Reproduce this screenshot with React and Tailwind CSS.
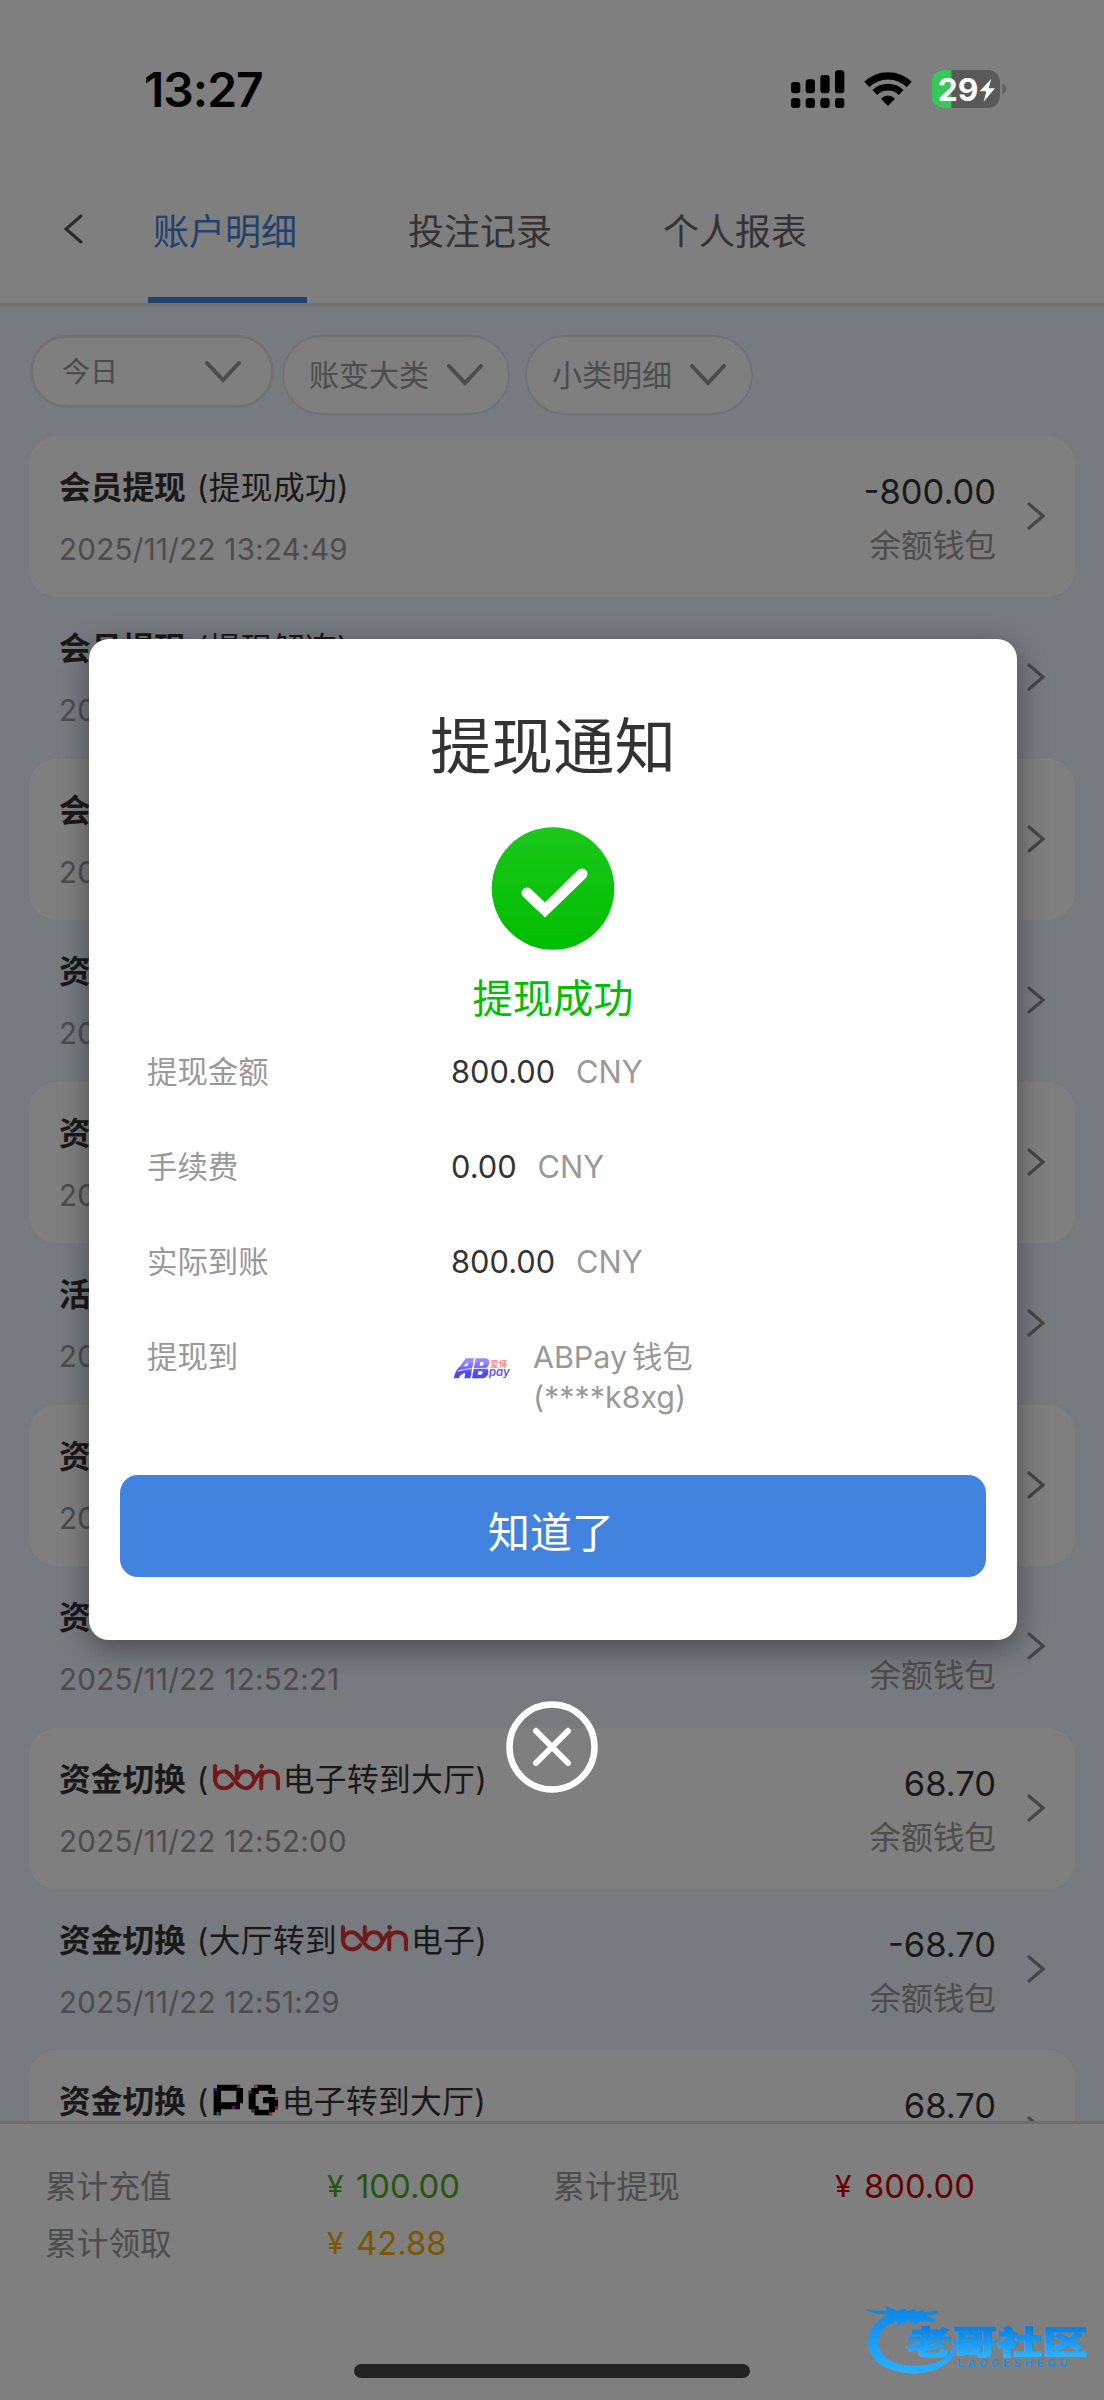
import React from "react";

const UI = "font-['Inter','Noto_Sans_CJK_SC',sans-serif]";

function Signal() {
  return (
    <svg width="54" height="38" viewBox="95 60 162 114">
      <g fill="#000">
        <rect x="95" y="96" width="28" height="34" rx="9" />
        <rect x="139" y="88" width="28" height="42" rx="9" />
        <rect x="183" y="75" width="28" height="55" rx="9" />
        <rect x="227" y="61" width="28" height="69" rx="9" />
        <rect x="95" y="144" width="28" height="30" rx="9" />
        <rect x="139" y="144" width="28" height="30" rx="9" />
        <rect x="183" y="144" width="28" height="30" rx="9" />
        <rect x="227" y="144" width="28" height="30" rx="9" />
      </g>
    </svg>
  );
}

function Wifi() {
  return (
    <svg width="48" height="36" viewBox="313 64 144 108">
      <g fill="none" stroke="#000">
        <path d="M321.5 104.5A91 91 0 0 1 448.5 104.5" strokeWidth="22" />
        <path d="M345.5 128.5A57 57 0 0 1 424.500 128.5" strokeWidth="20" />
      </g>
      <path d="M385 169L364 147Q385 128 406 147Z" fill="#000" />
    </svg>
  );
}

function Battery() {
  return (
    <svg width="76" height="38" viewBox="515 60 228 114">
      <defs>
        <clipPath id="cell"><rect x="516" y="60" width="206" height="114" rx="36" /></clipPath>
      </defs>
      <g clipPath="url(#cell)">
        <rect x="515" y="60" width="210" height="114" fill="#595959" />
        <rect x="515" y="60" width="61" height="114" fill="#34c759" />
      </g>
      <path d="M729 101Q741 106 741 117T729 133Z" fill="#606060" />
      <text x="535" y="152" fontFamily="Inter, sans-serif" fontWeight="700" fontSize="94" textLength="122" lengthAdjust="spacingAndGlyphs" fill="#fff">29</text>
      <path d="M696 86L661 124H681L673 155L707 115H688Z" fill="#fff" />
    </svg>
  );
}

function Bbin() {
  return (
    <svg className="mr-[3px] ml-[4px] inline-block h-[27px] w-[67px] align-[0px]" viewBox="0 0 200 80" fill="none" stroke="#de3236" strokeWidth="12" strokeLinecap="round">
      <path d="M6 6V44C6 62 17 72 33 72C43 72 51 68 57 60" />
      <path d="M7 42C10 27 21 21 33 21C58 21 68 72 97 72C123 72 122 38 145 22" />
      <path d="M71 6V40M74 42C78 26 87 21 98 21C112 21 120 30 122 42" />
      <path d="M144 73V40C146 24 158 21 169 21C184 21 194 30 194 45V73" />
      <circle cx="145" cy="7" r="7" fill="#de3236" stroke="none" />
    </svg>
  );
}

function PG() {
  return (
    <svg className="mr-[3px] ml-[4px] inline-block h-[32px] w-[66px] align-[-3px]" viewBox="68 1000 198 96">
      <path fill="#000" d="M80 1002H149V1012H158V1058H149V1076H92V1094H70V1012H80ZM92 1020V1055H138V1020ZM192 1002H245V1012H255V1030H234V1020H205V1030H196V1066H205V1077H236V1058H218V1039H263V1076H254V1085H245V1094H192V1085H183V1076H175V1020H183V1012H192Z" />
      <rect x="70" y="1012" width="10" height="10" fill="#7a20e8" />
      <rect x="140" y="1002" width="10" height="10" fill="#f47a20" />
      <rect x="78" y="1084" width="10" height="10" fill="#22b8d8" />
      <rect x="124" y="1066" width="10" height="9" fill="#d820c8" />
      <rect x="192" y="1002" width="10" height="10" fill="#f0b020" />
      <rect x="175" y="1020" width="9" height="10" fill="#e02080" />
      <rect x="253" y="1040" width="10" height="8" fill="#f07020" />
      <rect x="253" y="1066" width="10" height="10" fill="#e82040" />
      <rect x="183" y="1076" width="10" height="9" fill="#2080e0" />
      <rect x="236" y="1085" width="10" height="9" fill="#f07020" />
    </svg>
  );
}

function ABPayLogo() {
  return (
    <svg width="58" height="24" viewBox="40 46 174 72">
      <defs>
        <linearGradient id="ab" gradientUnits="userSpaceOnUse" x1="0" y1="52" x2="0" y2="114">
          <stop offset="0.15" stopColor="#9a8cf4" />
          <stop offset="0.75" stopColor="#4a46f6" />
        </linearGradient>
      </defs>
      <path fill="url(#ab)" d="M78 53H103L92 113H74L77 97Q62 99 57 113H42Q48 86 62 76Z" />
      <path fill="url(#ab)" d="M108 53H137Q151 55 149 68Q147 77 140 82Q148 87 146 97Q142 113 126 113H97Z" />
      <path fill="#fff" d="M86 64L83 77H70ZM122 64H130Q134 66 132 71Q130 75 126 75H120ZM116 92H127Q131 94 129 98Q127 102 123 102H114Z" />
      <path fill="none" stroke="#fff" strokeWidth="2.5" d="M54 92Q76 82 142 83" />
      <text x="152" y="78" fontFamily="'Noto Sans CJK SC', sans-serif" fontWeight="700" fontSize="25" fill="#ee9088">爱博</text>
      <text x="148" y="107" fontFamily="Inter, sans-serif" fontStyle="italic" fontWeight="600" fontSize="35" textLength="62" lengthAdjust="spacingAndGlyphs" fill="#5c58f4">pay</text>
    </svg>
  );
}

function Watermark() {
  return (
    <svg className="absolute right-0 bottom-0" width="284" height="120" viewBox="0 0 852 360">
      <defs>
        <linearGradient id="wm" gradientUnits="userSpaceOnUse" x1="0" y1="80" x2="0" y2="280">
          <stop offset="0" stopColor="#0a86ea" />
          <stop offset="1" stopColor="#2ab0ff" />
        </linearGradient>
        <linearGradient id="wt" gradientUnits="userSpaceOnUse" x1="0" y1="143" x2="0" y2="230">
          <stop offset="0" stopColor="#0a80e4" />
          <stop offset="1" stopColor="#2cb2ff" />
        </linearGradient>
      </defs>
      <path fill="url(#wm)" d="M140 86Q170 96 203 91L195 78L232 92L252 84L262 94L284 86L290 96L312 89L310 97L352 92Q358 100 346 104L318 108L348 119Q346 131 330 126L304 124L282 132L262 124L228 142L236 122Q176 140 174 186Q178 252 284 258Q372 254 392 214L405 196Q412 232 372 256Q334 280 284 281Q150 274 144 188Q146 130 208 102Q166 106 140 90Z" />
      <text x="258" y="222" fontFamily="'Noto Sans CJK SC', sans-serif" fontWeight="900" fontSize="94" textLength="546" lengthAdjust="spacingAndGlyphs" fill="url(#wt)" stroke="url(#wt)" strokeWidth="3">老哥社区</text>
      <text x="412" y="261" fontFamily="Inter, sans-serif" fontWeight="500" fontSize="33" textLength="330" fill="#1f8ee6">LAOGESHEQU</text>
    </svg>
  );
}

function Down() {
  return (
    <svg width="36" height="22" viewBox="0 0 36 22" fill="none" stroke="#999" strokeWidth="4" strokeLinecap="round">
      <path d="M2 2L18 19L34 2" />
    </svg>
  );
}

const rows = [
  { name: "会员提现", note: "提现成功", time: "2025/11/22 13:24:49", amount: "-800.00" },
  { name: "会员提现", note: "提现解冻", time: "2025/11/22" },
  { name: "会员提现", time: "2025/11/22" },
  { name: "资金切换", time: "2025/11/22" },
  { name: "资金切换", time: "2025/11/22" },
  { name: "活动", time: "2025/11/22" },
  { name: "资金切换", time: "2025/11/22" },
  { name: "资金切换", time: "2025/11/22 12:52:21" },
  { name: "资金切换", note: <><Bbin />电子转到大厅</>, time: "2025/11/22 12:52:00", amount: "68.70" },
  { name: "资金切换", note: <>大厅转到<Bbin />电子</>, time: "2025/11/22 12:51:29", amount: "-68.70" },
  { name: "资金切换", note: <><PG />电子转到大厅</>, time: "2025/11/22 12:51:02", amount: "68.70" },
];

function Row({ name, note, time, amount, white }) {
  return (
    <div className={`flex h-[161.45px] shrink-0 justify-between rounded-[28px] px-[30px] ${white ? "bg-white" : ""}`}>
      <div className="pt-[30px]">
        <div className="flex h-11 items-baseline text-[31.7px] leading-[44px] whitespace-nowrap text-[#333]">
          <span className="font-bold">{name}</span>
          {note && <span className="ml-[11px] tracking-[0.4px]">({note})</span>}
        </div>
        <div className="mt-[19px] text-[29.5px] leading-[40px] tracking-[0.3px] text-[#999]">{time}</div>
      </div>
      <div className="flex">
        <div className="pt-[34px] text-right">
          <div className="h-11 text-[34.500px] leading-[44px] text-[#333]">{amount}</div>
          <div className="mt-[12px] text-[31.7px] leading-[40px] text-[#999]">余额钱包</div>
        </div>
        <svg className="mt-[66px] ml-[31px]" width="18" height="28" viewBox="0 0 18 28" fill="none" stroke="#8c8c8c" strokeWidth="3.2" strokeLinecap="round">
          <path d="M2 2L16 14L2 26" />
        </svg>
      </div>
    </div>
  );
}

function Detail({ label, children }) {
  return (
    <div className="flex h-[94.900px]">
      <div className="w-[304px] text-[30.4px] leading-[40px] text-[#999]">{label}</div>
      {children}
    </div>
  );
}

function Money({ value }) {
  return (
    <div className="text-[30.8px] leading-[40px]">
      <span className="text-[#333]">{value}</span>
      <span className="ml-[21px] text-[#999]">CNY</span>
    </div>
  );
}

function Total({ label, value, color }) {
  return (
    <div className="flex w-[508px] text-[31.7px] leading-[57px]">
      <span className="w-[282px] text-[#999]">{label}</span>
      <span className={`flex h-[57px] ${color}`}><span className="w-[26px] text-[30px]">¥</span><span className="ml-[3px] text-[32.8px]">{value}</span></span>
    </div>
  );
}

export default function App() {
  return (
    <div className={`relative flex h-[2400px] w-[1104px] flex-col overflow-hidden bg-[#eff5ff] ${UI}`}>
      <header className="flex h-[306px] shrink-0 items-end border-b-[3px] border-[#e2e2e2] bg-white">
        <svg className="mb-[59px] ml-[63px]" width="20" height="30" viewBox="0 0 20 30" fill="none" stroke="#555" strokeWidth="3" strokeLinecap="round">
          <path d="M18 2L3 15L18 28" />
        </svg>
        <nav className="ml-[65px] flex text-[36px] leading-[48px] text-[#666]">
          <div className="w-[159px] border-b-[6px] border-[#4283df] pr-[5px] pb-[41px] text-center text-[#4283df]">账户明细</div>
          <div className="ml-[96px] w-[154px] text-center">投注记录</div>
          <div className="ml-[101px] w-[154px] text-center">个人报表</div>
        </nav>
      </header>
      <div className="flex shrink-0 items-start px-[30px] pt-[29px] text-[30px] text-[#999]">
        <div className="flex h-[73px] w-[244px] items-center justify-between rounded-full border-[3px] border-[#e5e5e5] bg-white pr-[30px] pl-[29px]">
          <span className="text-[28px]">今日</span><Down />
        </div>
        <div className="ml-2 flex h-[80px] w-[228px] items-center justify-between rounded-full border-2 border-[#e2e4e8] bg-white pr-[25px] pl-[25px]">
          <span>账变大类</span><Down />
        </div>
        <div className="ml-[15px] flex h-[80px] w-[228px] items-center justify-between rounded-full border-2 border-[#e2e4e8] bg-white pr-[25px] pl-[25px]">
          <span>小类明细</span><Down />
        </div>
      </div>
      <main className="mt-[21px] flex min-h-0 flex-1 flex-col overflow-hidden px-[29px]">
        {rows.map((r, i) => <Row key={i} {...r} white={i % 2 === 0} />)}
      </main>
      <footer className="h-[279px] shrink-0 border-t-[3px] border-[#dcdcdc] bg-white pt-[34px] pl-[45px]">
        <div className="flex">
          <Total label="累计充值" value="100.00" color="text-[#4caf22]" />
          <Total label="累计提现" value="800.00" color="text-[#cc0000]" />
        </div>
        <Total label="累计领取" value="42.88" color="text-[#f5b000]" />
      </footer>

      <div className="absolute inset-0 flex flex-col items-center bg-black/50 pt-[639px]">
        <section className="ml-[2px] flex h-[1001px] w-[928px] shrink-0 flex-col items-center rounded-[20px] bg-white px-[31px] shadow-[0_8px_30px_rgba(0,0,0,0.4)]">
          <h1 className="mt-[68px] text-[61.500px] leading-[80px] text-[#333]">提现通知</h1>
          <svg className="mt-[40px] shrink-0" width="124" height="124" viewBox="0 0 124 124">
            <defs>
              <linearGradient id="ok" x1="0" y1="0" x2="0" y2="1">
                <stop offset="0" stopColor="#1bc81b" />
                <stop offset="1" stopColor="#00be00" />
              </linearGradient>
            </defs>
            <circle cx="62" cy="61.500" r="61.3" fill="url(#ok)" />
            <path d="M36 66L54 83L91 47" fill="none" stroke="#fff" strokeWidth="11" strokeLinecap="round" strokeLinejoin="miter" />
          </svg>
          <div className="mt-[20px] text-[40.300px] leading-[56px] text-[#00be00]">提现成功</div>
          <div className="mt-[25px] h-[423px] w-full shrink-0 pl-[27px]">
            <Detail label="提现金额"><Money value="800.00" /></Detail>
            <Detail label="手续费"><Money value="0.00" /></Detail>
            <Detail label="实际到账"><Money value="800.00" /></Detail>
            <Detail label="提现到">
              <div className="pt-[19px] pl-[2px]"><ABPayLogo /></div>
              <div className="ml-[22px] text-[30.4px] leading-[40px] text-[#999]">
                <div>ABPay<span className="ml-[5px]">钱包</span></div>
                <div>(****k8xg)</div>
              </div>
            </Detail>
          </div>
          <button className="h-[102px] w-full shrink-0 rounded-[18px] bg-[#4283df] pt-[14px] pr-[4px] text-[42px] leading-[88px] text-white">知道了</button>
        </section>
        <svg className="mt-[61px] shrink-0" width="92" height="92" viewBox="0 0 92 92" fill="none" stroke="#fff" strokeWidth="6.5" strokeLinecap="round">
          <circle cx="46" cy="46" r="42.500" />
          <path d="M30 30L62 62M62 30L30 62" strokeWidth="6" />
        </svg>
      </div>

      <div className="absolute inset-x-0 top-[70px] flex h-[38px] items-center pr-[97px] pl-[144px]">
        <span className="pt-px text-[48px] leading-[38px] font-semibold tracking-[-1px] text-black">13:27</span>
        <div className="ml-auto flex items-center">
          <Signal />
          <span className="w-[19px]" />
          <Wifi />
          <span className="w-[19px]" />
          <Battery />
        </div>
      </div>
      <div className="absolute bottom-[22px] left-[354px] h-[14px] w-[396px] rounded-full bg-[#222]" />
      <Watermark />
    </div>
  );
}
